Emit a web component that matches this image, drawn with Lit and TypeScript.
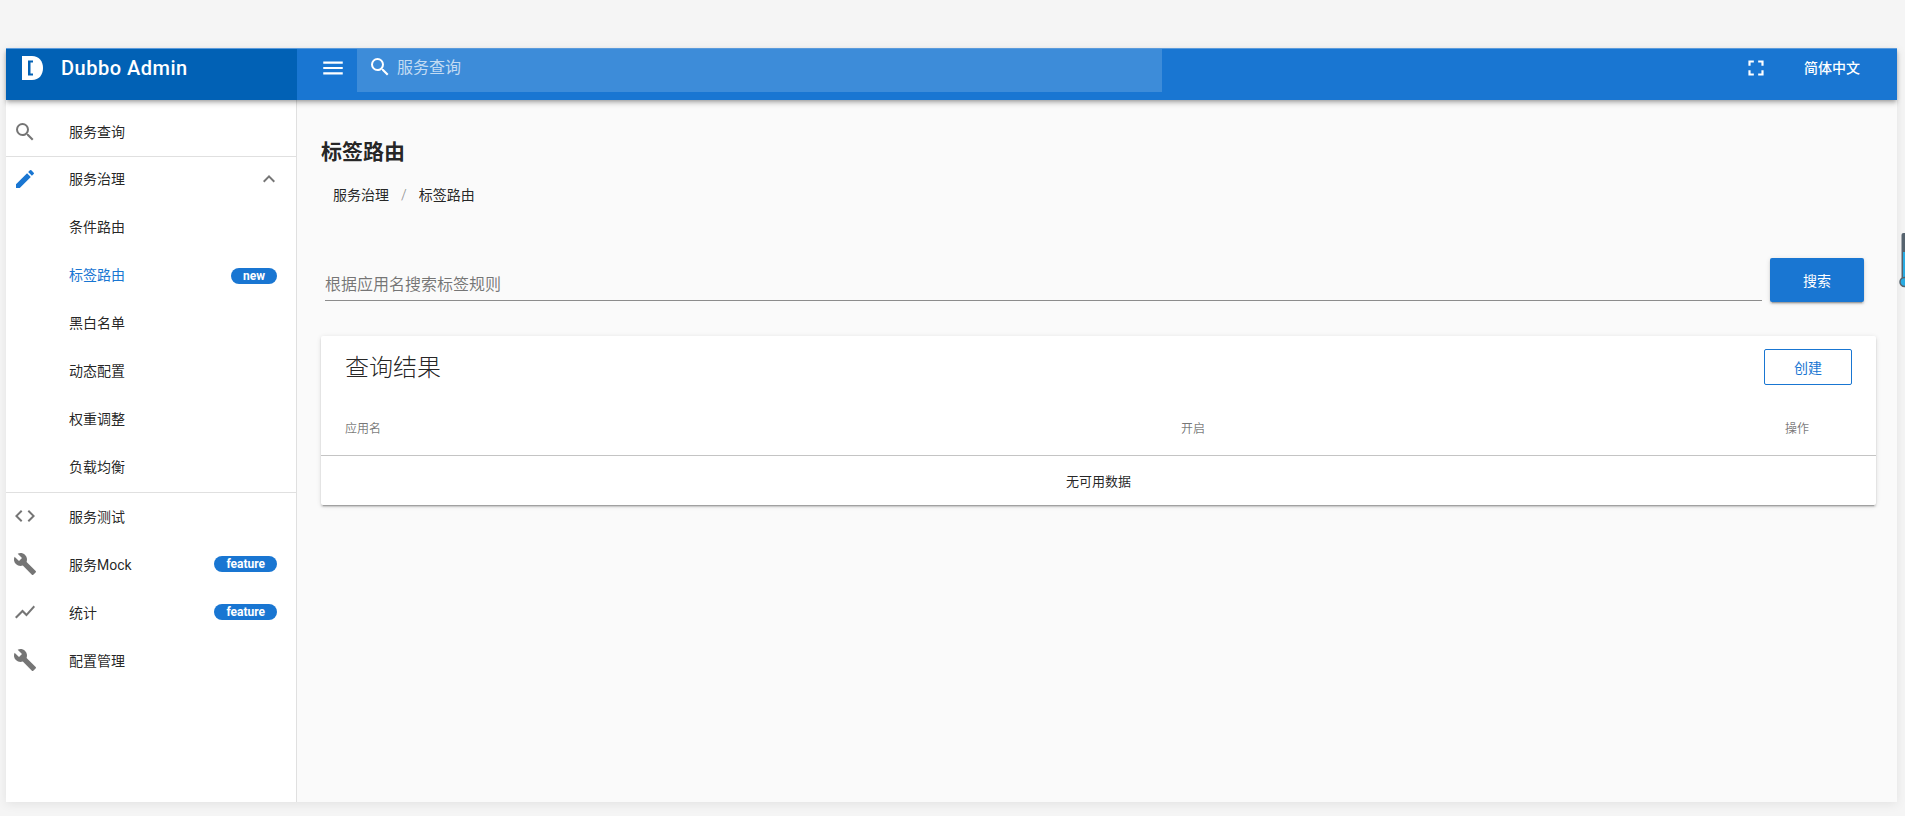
import { LitElement, html, css, svg } from "lit";
import { customElement } from "lit/decorators.js";

const P = {
  search: "M15.5 14h-.79l-.28-.27A6.47 6.47 0 0 0 16 9.5 6.5 6.5 0 1 0 9.5 16c1.61 0 3.09-.59 4.23-1.57l.27.28v.79l5 4.99L20.49 19l-4.99-5zm-6 0C7.01 14 5 11.99 5 9.5S7.01 5 9.5 5 14 7.01 14 9.5 11.99 14 9.5 14z",
  edit: "M3 17.25V21h3.75L17.81 9.94l-3.75-3.75L3 17.25zM20.71 7.04a1 1 0 0 0 0-1.41l-2.34-2.34a1 1 0 0 0-1.41 0l-1.83 1.83 3.75 3.75 1.83-1.83z",
  up: "M7.41 15.41L12 10.83l4.59 4.58L18 14l-6-6-6 6z",
  code: "M9.4 16.6L4.8 12l4.6-4.6L8 6l-6 6 6 6 1.4-1.4zm5.2 0l4.6-4.6-4.6-4.6L16 6l6 6-6 6-1.4-1.4z",
  build: "M22.7 19l-9.1-9.1c.9-2.3.4-5-1.5-6.9-2-2-5-2.4-7.4-1.3L9 6 6 9 1.6 4.7C.4 7.1.9 10.1 2.9 12.1c1.9 1.9 4.6 2.4 6.9 1.5l9.1 9.1c.4.4 1 .4 1.4 0l2.3-2.3c.5-.4.5-1.1.1-1.4z",
  chart: "M3.5 18.49l6-6.01 4 4L22 6.92l-1.41-1.41-7.09 7.97-4-4L2 16.99z",
  full: "M7 14H5v5h5v-2H7v-3zm-2-4h2V7h3V5H5v5zm12 7h-3v2h5v-5h-2v3zM14 5v2h3v3h2V5h-5z",
  menu: "M3 18h18v-2H3v2zm0-5h18v-2H3v2zm0-7v2h18V6H3z",
};
const icon = (k: keyof typeof P, cls = "") =>
  html`<svg class="ic ${cls}" viewBox="0 0 24 24">${svg`<path d=${P[k]}></path>`}</svg>`;

type Row = { t: string; i?: keyof typeof P; b?: string; cls?: string; up?: boolean; icls?: string };
const group1: Row[] = [{ t: "服务查询", i: "search", cls: "lift" }];
const group2: Row[] = [
  { t: "服务治理", i: "edit", icls: "blue", up: true, cls: "lift" },
  { t: "条件路由", cls: "lift" },
  { t: "标签路由", b: "new", cls: "lift active" },
  { t: "黑白名单", cls: "lift" },
  { t: "动态配置", cls: "lift" },
  { t: "权重调整", cls: "lift" },
  { t: "负载均衡", cls: "lift" },
];
const group3: Row[] = [
  { t: "服务测试", i: "code" },
  { t: "服务Mock", i: "build", b: "feature" },
  { t: "统计", i: "chart", b: "feature" },
  { t: "配置管理", i: "build" },
];

@customElement("app-root")
export class AppRoot extends LitElement {
  static styles = css`
    :host {
      display: block;
      height: 816px;
      box-sizing: border-box;
      padding: 48px 8px 14px 6px;
      background: #f5f5f5;
      overflow: hidden;
      position: relative;
      font-family: Roboto, "Noto Sans CJK SC", sans-serif;
      font-size: 14px;
      color: rgba(0, 0, 0, 0.87);
    }
    .frame {
      height: 100%;
      display: flex;
      flex-direction: column;
      box-shadow: 0 2px 10px rgba(0, 0, 0, 0.08);
    }
    .ic { width: 24px; height: 24px; fill: currentColor; display: block; flex: none; }
    .top {
      height: 52px;
      flex: none;
      display: flex;
      background: #1976d2;
      color: #fff;
      border-top: 1px solid #5b9bdc;
      box-sizing: border-box;
      box-shadow: 0 2px 4px -1px rgba(0,0,0,.3), 0 4px 5px 0 rgba(0,0,0,.14);
      position: relative;
      z-index: 2;
    }
    .brand {
      width: 291px;
      flex: none;
      box-sizing: border-box;
      background: #0161b5;
      display: flex;
      align-items: flex-start;
      padding: 7px 0 0 16px;
      gap: 16px;
    }
    .logo { width: 23px; height: 24px; flex: none; }
    .brand b {
      font-size: 20px;
      font-weight: 500;
      line-height: 24px;
      letter-spacing: 0.5px;
    }
    .burger { margin: 6px 0 0 23px; width: 26px; height: 26px; }
    .search {
      margin-left: 11px;
      width: 805px;
      height: 43px;
      background: rgba(255, 255, 255, 0.16);
      display: flex;
      align-items: flex-start;
      padding: 6px 0 0 11px;
      box-sizing: border-box;
      font-size: 16px;
      line-height: 24px;
      color: rgba(255, 255, 255, 0.7);
      gap: 5px;
    }
    .search .ic { color: #fff; }
    .search span { padding-top: 1px; }
    .grow { flex: 1; }
    .full { margin: 6px 35px 0 0; width: 26px; height: 26px; }
    .lang { margin: 7px 37px 0 0; line-height: 24px; font-size: 14px; font-weight: 500; }
    .body { flex: 1; display: flex; min-height: 0; }
    .drawer {
      width: 291px;
      flex: none;
      box-sizing: border-box;
      background: #fff;
      border-right: 1px solid #e0e0e0;
      padding-top: 8px;
    }
    .rule { height: 1px; background: #e0e0e0; }
    .rule.a { margin-bottom: -2px; position: relative; }
    .rule.b { margin-top: 1px; margin-bottom: -1px; position: relative; }
    .row {
      height: 48px;
      display: flex;
      align-items: center;
      padding: 0 19px 0 7px;
      color: rgba(0, 0, 0, 0.87);
    }
    .row .slot { width: 24px; height: 24px; margin-right: 32px; flex: none; color: rgba(0, 0, 0, 0.54); }
    .row .slot .blue { color: #1976d2; }
    .row.active { color: #1976d2; }
    .row span.t { flex: 1; }
    .row.lift span.t { margin-bottom: 2px; }
    .row.lift .badge { margin-top: 2px; }
    .chev { color: rgba(0, 0, 0, 0.54); margin-right: -4px; }
    .badge {
      height: 16px;
      padding: 0 12px;
      border-radius: 8px;
      background: #1976d2;
      color: #fff;
      font-size: 12px;
      font-weight: 700;
      line-height: 16px;
    }
    .main {
      flex: 1;
      min-width: 0;
      background: #fafafa;
      padding: 36px 21px 0 24px;
    }
    h1 { margin: 0; font-size: 21px; line-height: 32px; font-weight: 700; }
    .crumbs { display: flex; margin-top: 16px; padding-left: 12px; line-height: 22px; gap: 12px; }
    .crumbs i { font-style: normal; color: rgba(0, 0, 0, 0.38); }
    .searchrow { display: flex; gap: 8px; margin-top: 52px; padding: 0 12px 0 4px; align-items: flex-start; }
    .field {
      flex: 1;
      height: 43px;
      box-sizing: border-box;
      border-bottom: 1px solid #8c8c8c;
      font-size: 16px;
      color: rgba(0, 0, 0, 0.54);
      padding-top: 15px;
      line-height: 24px;
    }
    .btn {
      width: 94px;
      height: 44px;
      border-radius: 2px;
      background: #1976d2;
      color: #fff;
      display: flex;
      align-items: center;
      justify-content: center;
      box-shadow: 0 3px 1px -2px rgba(0,0,0,.2), 0 2px 2px 0 rgba(0,0,0,.14), 0 1px 5px 0 rgba(0,0,0,.12);
    }
    .card {
      margin-top: 34px;
      background: #fff;
      border-radius: 2px;
      box-shadow: 0 3px 1px -2px rgba(0,0,0,.2), 0 2px 2px 0 rgba(0,0,0,.14), 0 1px 5px 0 rgba(0,0,0,.12);
    }
    .cardhead { display: flex; align-items: flex-start; justify-content: space-between; padding: 13px 24px 0; height: 64px; box-sizing: border-box; }
    .cardhead h2 { margin: 0; font-size: 24px; font-weight: 300; line-height: 38px; }
    .outline {
      width: 88px;
      height: 36px;
      box-sizing: border-box;
      border: 1px solid #1976d2;
      border-radius: 2px;
      color: #1976d2;
      display: flex;
      align-items: center;
      justify-content: center;
    }
    .thead {
      display: grid;
      grid-template-columns: 836px 604px 1fr;
      height: 56px;
      align-items: center;
      padding-left: 24px;
      font-size: 12px;
      color: rgba(0, 0, 0, 0.54);
      border-bottom: 1px solid #c4c4c4;
      box-sizing: border-box;
    }
    .empty { height: 49px; display: flex; align-items: center; justify-content: center; font-size: 13px; }
    .handle { position: absolute; left: 1899px; top: 233px; width: 10px; height: 56px; }
  `;

  private row(r: Row) {
    return html`<div class="row ${r.cls ?? ""}">
      <div class="slot">${r.i ? icon(r.i, r.icls ?? "") : ""}</div>
      <span class="t">${r.t}</span>
      ${r.up ? icon("up", "chev") : ""}
      ${r.b ? html`<span class="badge">${r.b}</span>` : ""}
    </div>`;
  }

  render() {
    return html`
      <div class="frame">
        <header class="top">
          <div class="brand">
            <svg class="logo" viewBox="0 0 23 24">
              <path fill="#fff" d="M0 0h10c7 0 11 5 11 12s-4 12-11 12H0z"></path>
              <path fill="#0161b5" d="M6 4.5h5V6.5H8.5v11H11V19.500H6z"></path>
            </svg>
            <b>Dubbo Admin</b>
          </div>
          ${icon("menu", "burger")}
          <div class="search">${icon("search")}<span>服务查询</span></div>
          <div class="grow"></div>
          ${icon("full", "full")}
          <div class="lang">简体中文</div>
        </header>
        <div class="body">
          <nav class="drawer">
            ${group1.map((r) => this.row(r))}
            <div class="rule a"></div>
            ${group2.map((r) => this.row(r))}
            <div class="rule b"></div>
            ${group3.map((r) => this.row(r))}
          </nav>
          <main class="main">
            <h1>标签路由</h1>
            <div class="crumbs"><span>服务治理</span><i>/</i><span>标签路由</span></div>
            <div class="searchrow">
              <div class="field">根据应用名搜索标签规则</div>
              <div class="btn">搜索</div>
            </div>
            <section class="card">
              <div class="cardhead"><h2>查询结果</h2><div class="outline">创建</div></div>
              <div class="thead"><span>应用名</span><span>开启</span><span>操作</span></div>
              <div class="empty">无可用数据</div>
            </section>
          </main>
        </div>
      </div>
      <svg class="handle" viewBox="0 0 10 56">
        <path d="M2.500 46V2q0-2 2-2H10v46z" fill="#56636e"></path>
        <path d="M4 19h6v28H4z" fill="#29abe2"></path>
        <circle cx="5.500" cy="49" r="4.500" fill="#29abe2" stroke="#56636e" stroke-width="1.500"></circle>
      </svg>
    `;
  }
}
